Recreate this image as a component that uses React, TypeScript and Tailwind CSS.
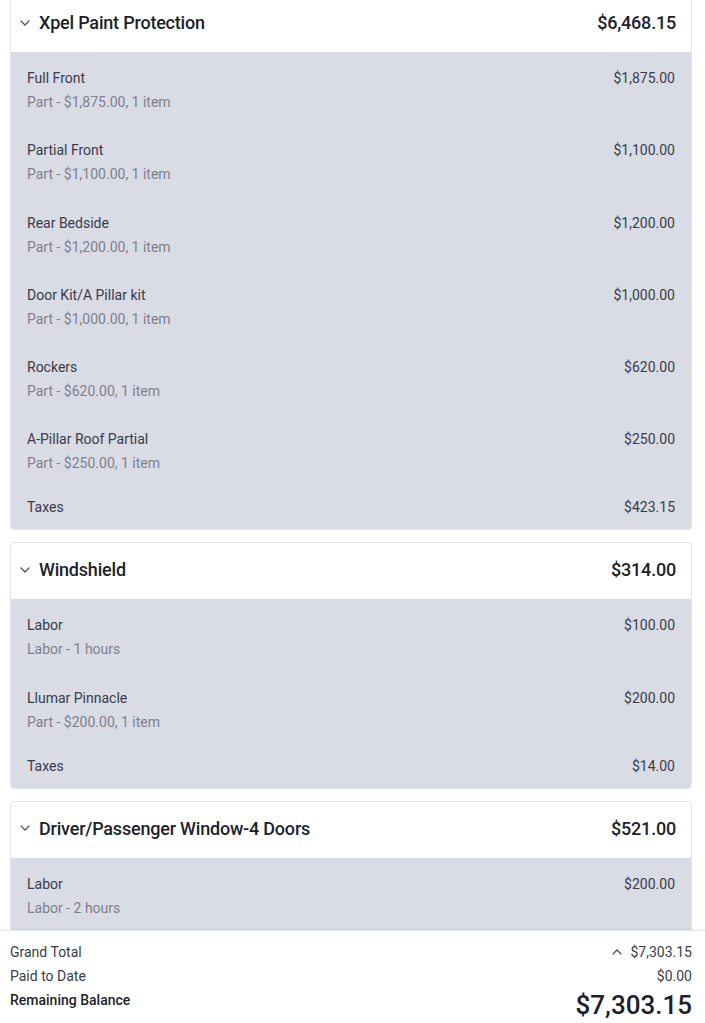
import React from "react";

type Item = { name: string; sub: string; price: string };
type Section = { title: string; total: string; items: Item[]; taxes?: string };

const sections: Section[] = [
  {
    title: "Xpel Paint Protection",
    total: "$6,468.15",
    items: [
      { name: "Full Front", sub: "Part - $1,875.00, 1 item", price: "$1,875.00" },
      { name: "Partial Front", sub: "Part - $1,100.00, 1 item", price: "$1,100.00" },
      { name: "Rear Bedside", sub: "Part - $1,200.00, 1 item", price: "$1,200.00" },
      { name: "Door Kit/A Pillar kit", sub: "Part - $1,000.00, 1 item", price: "$1,000.00" },
      { name: "Rockers", sub: "Part - $620.00, 1 item", price: "$620.00" },
      { name: "A-Pillar Roof Partial", sub: "Part - $250.00, 1 item", price: "$250.00" },
    ],
    taxes: "$423.15",
  },
  {
    title: "Windshield",
    total: "$314.00",
    items: [
      { name: "Labor", sub: "Labor - 1 hours", price: "$100.00" },
      { name: "Llumar Pinnacle", sub: "Part - $200.00, 1 item", price: "$200.00" },
    ],
    taxes: "$14.00",
  },
  {
    title: "Driver/Passenger Window-4 Doors",
    total: "$521.00",
    items: [{ name: "Labor", sub: "Labor - 2 hours", price: "$200.00" }],
  },
];

function ChevronDown() {
  return (
    <svg width="10" height="6" viewBox="0 0 10 6" fill="none" className="shrink-0">
      <path d="M1 1l4 4 4-4" stroke="#4b4d5a" strokeWidth="1.2" strokeLinecap="round" strokeLinejoin="round" />
    </svg>
  );
}

function ChevronUp() {
  return (
    <svg width="10" height="6" viewBox="0 0 10 6" fill="none" className="shrink-0">
      <path d="M1 5l4-4 4 4" stroke="#4b4d5a" strokeWidth="1.2" strokeLinecap="round" strokeLinejoin="round" />
    </svg>
  );
}

function Card({ s }: { s: Section }) {
  return (
    <div className="rounded-[4px] border border-[#e3e4ea] bg-white overflow-hidden">
      <div className="h-[56px] pb-[3px] flex items-center justify-between pl-[9px] pr-[15px]">
        <div className="flex items-center gap-[9px]">
          <ChevronDown />
          <span className="text-[18px] font-medium text-[#1d1f2c] tracking-[-0.2px]">{s.title}</span>
        </div>
        <span className="text-[18px] font-medium text-[#1d1f2c] tracking-[-0.2px]">{s.total}</span>
      </div>
      <div className={"bg-[#d9dbe5] px-4 pt-4 " + (s.taxes ? "pb-3" : "pb-10")}>
        {s.items.map((it, i) => (
          <div
            key={i}
            className={
              i === s.items.length - 1 ? (s.taxes ? "mb-6" : "") : "mb-[28.3px]"
            }
          >
            <div className="flex justify-between text-[14px] leading-5 text-[#3a3c4a]">
              <span>{it.name}</span>
              <span>{it.price}</span>
            </div>
            <div className="mt-1 text-[14px] leading-5 text-[#7f818e]">{it.sub}</div>
          </div>
        ))}
        {s.taxes && (
          <div className="flex justify-between text-[14px] leading-5 text-[#3a3c4a]">
            <span>Taxes</span>
            <span>{s.taxes}</span>
          </div>
        )}
      </div>
    </div>
  );
}

export default function App() {
  return (
    <div
      className="h-[1023px] w-full flex flex-col bg-white overflow-hidden"
      style={{ fontFamily: "Roboto, 'Liberation Sans', sans-serif" }}
    >
      <div className="flex-1 overflow-hidden">
        <div className="-mt-[5px] pl-[10px] pr-[13px] flex flex-col gap-3">
          {sections.map((s, i) => (
            <Card key={i} s={s} />
          ))}
        </div>
      </div>
      <div className="h-[93px] shrink-0 border-t border-[#e6e7ec] shadow-[0_-1px_3px_rgba(0,0,0,0.06)] bg-white pl-[10px] pr-[13px] pt-[11px]">
        <div className="flex justify-between items-center text-[14px] leading-5 text-[#3a3c4a]">
          <span>Grand Total</span>
          <span className="flex items-center gap-[8px]">
            <ChevronUp />
            $7,303.15
          </span>
        </div>
        <div className="mt-1 flex justify-between text-[14px] leading-5 text-[#3a3c4a]">
          <span>Paid to Date</span>
          <span>$0.00</span>
        </div>
        <div className="mt-1 flex justify-between items-start">
          <span className="text-[14px] leading-5 font-medium text-[#1d1f2c]">Remaining Balance</span>
          <span className="-mt-[1px] text-[26px] leading-8 font-medium text-[#1d1f2c]">$7,303.15</span>
        </div>
      </div>
    </div>
  );
}
